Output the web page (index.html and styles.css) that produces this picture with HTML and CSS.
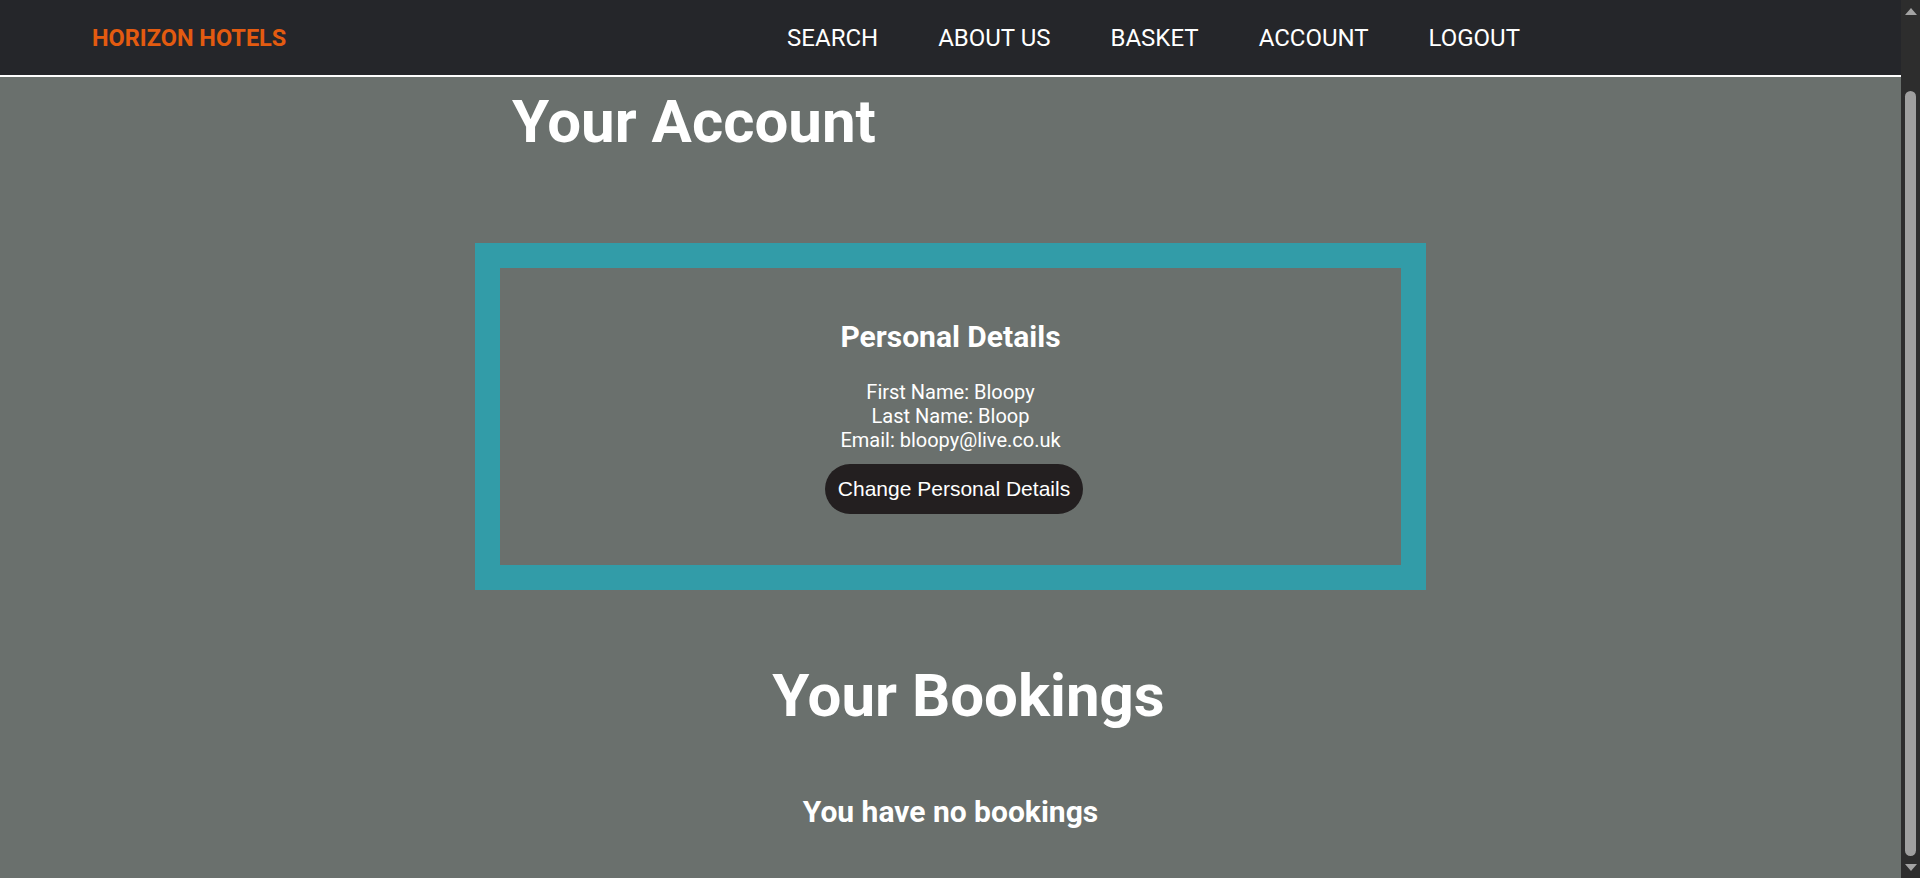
FILE: index.html
```html
<!DOCTYPE html>
<html lang="en">
<head>
<meta charset="utf-8">
<title>Your Account - Horizon Hotels</title>
<link rel="stylesheet" href="styles.css">
</head>
<body>
<nav class="topnav">
  <a class="logo" href="#">HORIZON HOTELS</a>
  <ul class="links">
    <li><a href="#">SEARCH</a></li>
    <li><a href="#">ABOUT US</a></li>
    <li><a href="#">BASKET</a></li>
    <li><a href="#">ACCOUNT</a></li>
    <li><a href="#">LOGOUT</a></li>
  </ul>
</nav>
<main class="page">
  <h1 class="title">Your Account</h1>
  <section class="card">
    <div class="card-inner">
      <h2 class="card-title">Personal Details</h2>
      <div class="details">
        <div>First Name: Bloopy</div>
        <div>Last Name: Bloop</div>
        <div>Email: bloopy@live.co.uk</div>
      </div>
      <button class="btn" type="button">Change Personal Details</button>
    </div>
  </section>
  <h1 class="title bookings-title">Your Bookings</h1>
  <h2 class="none">You have no bookings</h2>
</main>
<div class="scrollbar" aria-hidden="true">
  <span class="arrow up"></span>
  <span class="track"><span class="thumb"></span></span>
  <span class="arrow down"></span>
</div>
</body>
</html>
```

FILE: styles.css
```css
* {
  box-sizing: border-box;
}
html {
  overflow: hidden;
}
body {
  margin: 0;
  padding-right: 19px;
  background: #6a706d;
  color: #ffffff;
  font-family: Roboto, "Liberation Sans", Arial, sans-serif;
}
.topnav {
  display: flex;
  align-items: center;
  height: 77px;
  background: #25262a;
  border-bottom: 2px solid #ffffff;
  padding-left: 92px;
}
.logo {
  color: #e35b10;
  font-weight: 700;
  font-size: 23.5px;
  text-decoration: none;
}
.links {
  display: flex;
  gap: 60px;
  list-style: none;
  margin: 0 0 0 auto;
  padding: 0 381px 0 0;
}
.links a {
  color: #ffffff;
  text-decoration: none;
  font-size: 24px;
}
.page {
  display: flex;
  flex-direction: column;
  align-items: center;
  padding-bottom: 88px;
}
.title {
  margin: 9px 0 0 0;
  font-size: 60px;
  font-weight: 700;
  line-height: normal;
  align-self: flex-start;
  padding-left: 512px;
}
.card {
  margin-top: 86px;
  width: 951px;
  border: 25px solid #329ca8;
}
.card-inner {
  display: flex;
  flex-direction: column;
  align-items: center;
  padding: 51px 0;
}
.card-title {
  margin: 0;
  font-size: 30px;
  font-weight: 700;
  line-height: normal;
}
.details {
  margin-top: 26px;
  font-size: 20px;
  line-height: 24px;
  text-align: center;
}
.btn {
  margin: 12px 0 0 7px;
  background: #231f20;
  color: #ffffff;
  border: none;
  border-radius: 25px;
  padding: 12px 13px;
  font-family: "Liberation Sans", Arial, sans-serif;
  font-size: 21px;
  line-height: 26px;
}
.bookings-title {
  align-self: stretch;
  text-align: center;
  padding-left: 36px;
  margin-top: 70px;
}
.none {
  margin: 63px 0 0 0;
  font-size: 30px;
  font-weight: 700;
  line-height: normal;
}
.scrollbar {
  position: fixed;
  top: 0;
  right: 0;
  bottom: 0;
  width: 19px;
  background: #2d2d2d;
  display: flex;
  flex-direction: column;
  align-items: center;
}
.arrow {
  display: block;
  width: 0;
  height: 0;
  border-left: 6px solid transparent;
  border-right: 6px solid transparent;
}
.arrow.up {
  margin-top: 8px;
  border-bottom: 7px solid #a3a3a3;
}
.arrow.down {
  margin-bottom: 7px;
  border-top: 7px solid #a3a3a3;
}
.track {
  flex: 1;
  display: flex;
  flex-direction: column;
  width: 100%;
  align-items: center;
  padding: 76px 0 8px;
}
.thumb {
  flex: 1;
  width: 11px;
  border-radius: 6px;
  background: #9f9f9f;
}
```
